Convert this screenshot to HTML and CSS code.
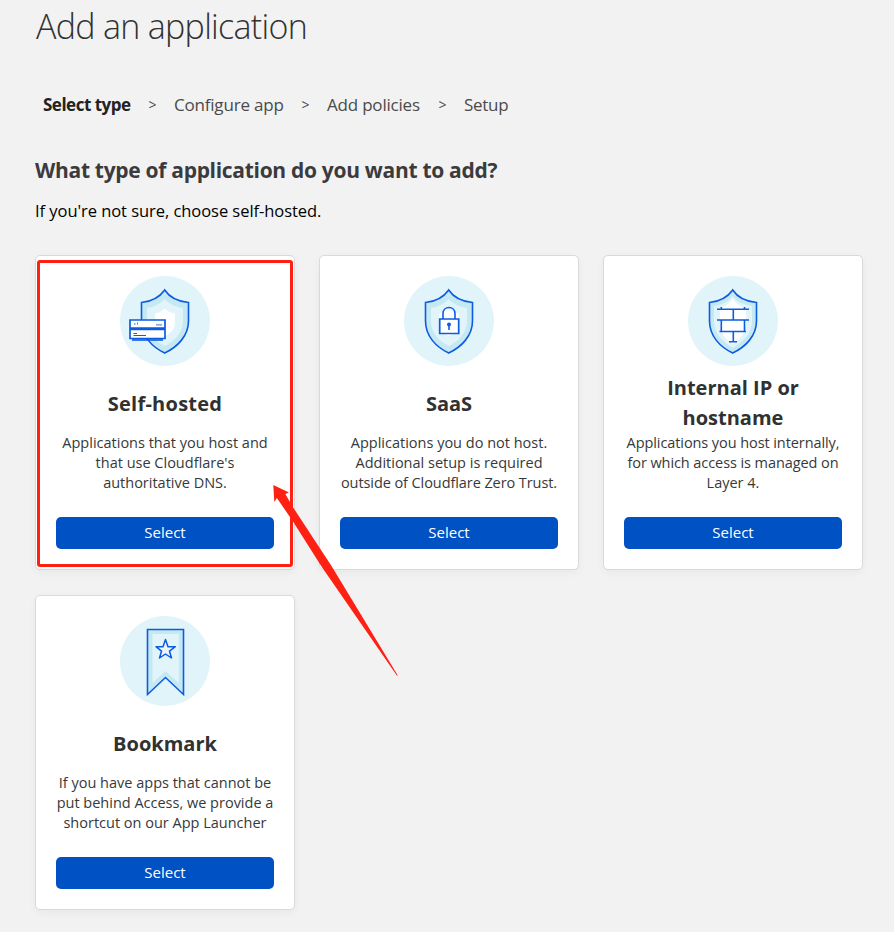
FILE: index.html
```html
<!DOCTYPE html>
<html lang="en">
<head>
<meta charset="utf-8">
<title>Add an application</title>
<link rel="stylesheet" href="styles.css">
</head>
<body>
<main class="page">
  <h1 class="title"><span>Add an application</span></h1>
  <nav class="steps">
    <span class="step step-1">Select type</span><span class="sep">&gt;</span>
    <span class="step step-2">Configure app</span><span class="sep">&gt;</span>
    <span class="step step-3">Add policies</span><span class="sep">&gt;</span>
    <span class="step step-4">Setup</span>
  </nav>
  <h2 class="question">What type of application do you want to add?</h2>
  <p class="hint">If you're not sure, choose self-hosted.</p>
  <section class="cards">
    <article class="card">
      <svg class="icon" viewBox="0 0 90 90">
        <circle class="disc" cx="45" cy="45" r="45"/>
        <path class="band" d="M44.700 14C39 22 32 25.500 21.500 26.500V45C21.500 60 32 71 44.700 77C57.400 71 68.500 60 68.500 45V26.500C58 25.500 50 22 44.700 14Z"/>
        <path class="disc" d="M44.700 23C40 28 34 31 27 32V45C27 57 35 65 44.700 70C54.500 65 63 57 63 45V32C56 31 49 28 44.700 23Z"/>
        <path class="white" d="M44.700 32.500C42 35 39 37 35 37.500V46C35 53 39 57 44.700 60C51 57 55 53 55 46V37.500C51 37 47 35 44.700 32.500Z"/>
        <path class="line" d="M44.700 14C39 22 32 25.500 21.500 26.500V45C21.500 60 32 71 44.700 77C57.400 71 68.500 60 68.500 45V26.500C58 25.500 50 22 44.700 14Z"/>
        <path class="server" d="M10 44H45V52H10ZM10 53.500H45V62.500H10Z"/>
        <path class="line" d="M12 64H43"/>
        <path class="thin" d="M14 48H15.500M17 48H18M17 47H18M13.500 57.500H17M13.500 59.500H26"/>
        <path class="soft" d="M36 48.800H42"/>
      </svg>
      <h3 class="name n-self">Self-hosted</h3>
      <p class="desc"><span>Applications that you host and</span><span>that use Cloudflare's</span><span>authoritative DNS.</span></p>
      <button class="select">Select</button>
    </article>
    <article class="card">
      <svg class="icon" viewBox="0 0 90 90">
        <circle class="disc" cx="45" cy="45" r="45"/>
        <path class="band" d="M44.700 14C39 22 32 25.500 21.500 26.500V45C21.500 60 32 71 44.700 77C57.400 71 68.500 60 68.500 45V26.500C58 25.500 50 22 44.700 14Z"/>
        <path class="disc" d="M44.700 23C40 28 34 31 27 32V45C27 57 35 65 44.700 70C54.500 65 63 57 63 45V32C56 31 49 28 44.700 23Z"/>
        <path class="white" d="M44.700 32.500C42 35 39 37 35 37.500V46C35 53 39 57 44.700 60C51 57 55 53 55 46V37.500C51 37 47 35 44.700 32.500Z"/>
        <path class="line" d="M44.700 14C39 22 32 25.500 21.500 26.500V45C21.500 60 32 71 44.700 77C57.400 71 68.500 60 68.500 45V26.500C58 25.500 50 22 44.700 14Z"/>
        <path class="line" d="M39 43V37.500C39 29.500 51 29.500 51 37.500V43"/>
        <path class="lock" d="M35.700 43H54.700V57.500H35.700Z"/>
        <circle class="solid" cx="45" cy="48.500" r="2"/>
        <path class="line" d="M45 49V54"/>
      </svg>
      <h3 class="name n-saas">SaaS</h3>
      <p class="desc"><span>Applications you do not host.</span><span>Additional setup is required</span><span class="snug">outside of Cloudflare Zero Trust.</span></p>
      <button class="select">Select</button>
    </article>
    <article class="card">
      <svg class="icon" viewBox="0 0 90 90">
        <circle class="disc" cx="45" cy="45" r="45"/>
        <path class="band" d="M44.700 14C39 22 32 25.500 21.500 26.500V45C21.500 60 32 71 44.700 77C57.400 71 68.500 60 68.500 45V26.500C58 25.500 50 22 44.700 14Z"/>
        <path class="disc" d="M44.700 20C40 26 34 29 26 30V45C26 58 35 66 44.700 72C54.500 66 64 58 64 45V30C56 29 49 26 44.700 20Z"/>
        <path class="white" d="M44.700 22C42 27 38 30 32 32.500V45C32 58 38 64 44.700 68C52 64 58 58 58 45V32.500C52 30 47 27 44.700 22Z"/>
        <path class="line" d="M44.700 14C39 22 32 25.500 21.500 26.500V45C21.500 60 32 71 44.700 77C57.400 71 68.500 60 68.500 45V26.500C58 25.500 50 22 44.700 14Z"/>
        <path class="line" d="M29 33.300H61M29 44H61M31.500 55.500H58M41 65.800H49M45.300 33.300V44M33.300 44V55.500M56.500 44V55.500M45.300 55.500V65.800M33.300 31V33M56.500 31V33"/>
      </svg>
      <h3 class="name n-ip">Internal IP or<br>hostname</h3>
      <p class="desc"><span class="snug">Applications you host internally,</span><span class="snug">for which access is managed on</span><span>Layer 4.</span></p>
      <button class="select">Select</button>
    </article>
    <article class="card">
      <svg class="icon" viewBox="0 0 90 90">
        <circle class="disc" cx="45" cy="45" r="45"/>
        <path class="band" d="M27.500 13.500H63.500V78.500L45.500 61L27.500 78.500Z"/>
        <path class="disc" d="M32.500 18H58.700V67L45.500 55L32.500 67Z"/>
        <path class="line" d="M27.500 13.500H63.500V78.500L45.500 61.500L27.500 78.500Z"/>
        <path class="star" d="M45.500 23.500L48 30.700H55.300L49.500 35.200L51.500 42L45.500 38L39.500 42L41.500 35.200L36 30.700H43Z"/>
      </svg>
      <h3 class="name n-book">Bookmark</h3>
      <p class="desc"><span>If you have apps that cannot be</span><span>put behind Access, we provide a</span><span>shortcut on our App Launcher</span></p>
      <button class="select">Select</button>
    </article>
  </section>
  <div class="highlight"></div>
  <svg class="arrow" viewBox="270 480 130 200"><path d="M273.300 485L289 492.500L285.300 494L293.500 508L331.500 566L397.800 675.500L397 675.800L321.500 566.500L293 521.500L276.900 498L274.300 502Z"/></svg>
</main>
</body>
</html>
```
FILE: styles.css
```css
* { box-sizing: border-box; }
body {
  margin: 0;
  background: #f2f2f2;
  color: #313131;
  font-family: "Open Sans", "Noto Sans", sans-serif;
}
h1, h2, h3, p { margin: 0; }
.page {
  position: relative;
  height: 932px;
  padding: 0 31px 0 35px;
  overflow: hidden;
}
.title {
  height: 54px;
  padding-left: 1px;
  font-size: 34px;
  line-height: 53px;
  font-weight: 300;
  letter-spacing: -0.7px;
  white-space: nowrap;
}
.steps {
  display: flex;
  align-items: center;
  height: 24px;
  margin-top: 39px;
  padding-left: 8px;
  font-size: 17px;
  line-height: 24px;
  white-space: nowrap;
  color: #4a4a4a;
}
.step { letter-spacing: -0.2px; }
.step-1 { width: 88px; font-weight: 700; letter-spacing: -0.5px; color: #222; }
.step-2 { width: 110px; }
.step-3 { width: 94px; }
.step-4 { letter-spacing: -0.3px; }
.sep { width: 43px; text-align: center; font-size: 14px; }
.question {
  margin-top: 37px;
  height: 33px;
  font-size: 21px;
  line-height: 32px;
  font-weight: 700;
  letter-spacing: -0.3px;
  white-space: nowrap;
  color: #3b3b3d;
}
.hint {
  margin-top: 12px;
  height: 24px;
  font-size: 16.5px;
  line-height: 24px;
  letter-spacing: -0.05px;
  color: #000;
}
.cards {
  display: grid;
  grid-template-columns: repeat(3, 260px);
  grid-auto-rows: 315px;
  gap: 25px 24px;
  margin-top: 32px;
}
.card {
  display: flex;
  flex-direction: column;
  align-items: center;
  padding: 20px;
  background: #fff;
  border: 1px solid #d9d9d9;
  border-radius: 5px;
  box-shadow: 0 3px 8px rgba(0, 0, 0, .045);
  text-align: center;
}
.icon { flex: none; width: 90px; height: 90px; }
.disc { fill: #e1f4fa; }
.band { fill: #c5e9f2; }
.white { fill: #fff; }
.line { fill: none; stroke: #0d5be1; stroke-width: 1.6; }
.server, .lock { fill: #fff; stroke: #0d5be1; stroke-width: 1.7; }
.thin { fill: none; stroke: #0d5be1; stroke-width: 1; }
.soft { fill: none; stroke: #82aef0; stroke-width: 1.8; }
.solid { fill: #0d5be1; }
.star { fill: #e8f6fc; stroke: #0d5be1; stroke-width: 1.5; stroke-linejoin: round; }
.name {
  display: flex;
  align-items: center;
  height: 60px;
  margin-top: 7px;
  font-size: 20px;
  line-height: 30px;
  font-weight: 700;
  white-space: nowrap;
}
.n-self { padding-top: 1px; letter-spacing: 0.25px; }
.n-saas, .n-book { padding-top: 1px; }
.desc {
  height: 60px;
  font-size: 14.5px;
  line-height: 20px;
  white-space: nowrap;
  color: #36393a;
}
.desc span { display: block; }
.desc .snug { letter-spacing: -0.08px; }
.select {
  width: 218px;
  height: 32px;
  margin-top: 24px;
  padding: 0 0 2px;
  border: 0;
  border-radius: 5px;
  background: #0051c3;
  color: #fff;
  font: 15px/30px "Open Sans", "Noto Sans", sans-serif;
}
.highlight {
  position: absolute;
  left: 37px;
  top: 260px;
  width: 256px;
  height: 307px;
  border: 3px solid #ff2014;
  border-radius: 3px;
}
.arrow {
  position: absolute;
  left: 270px;
  top: 480px;
  width: 130px;
  height: 200px;
  fill: #ff2014;
}
```
